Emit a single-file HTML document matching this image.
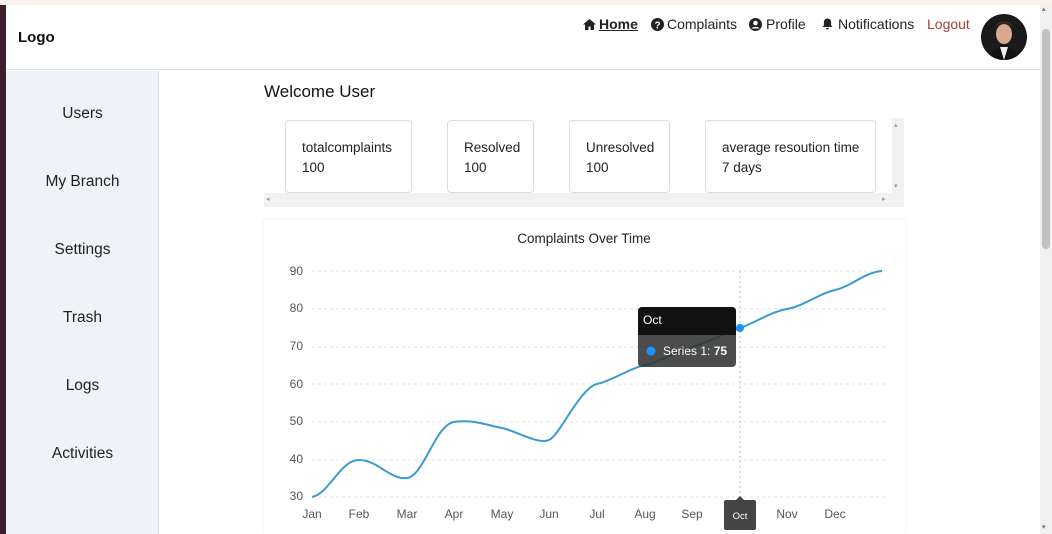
<!DOCTYPE html>
<html><head><meta charset="utf-8"><style>
*{margin:0;padding:0;box-sizing:border-box}
body{width:1052px;height:534px;overflow:hidden;background:#fff;font-family:"Liberation Sans",sans-serif;color:#111;position:relative}
.topline{position:absolute;left:0;top:0;width:1052px;height:5px;background:#fbf1ec}
.leftedge{position:absolute;left:0;top:5px;width:6px;height:529px;background:#3a1f2e}
.header{position:absolute;left:6px;top:5px;width:1034px;height:65px;border-bottom:1px solid #e4e4e4;background:#fff}
.logo{position:absolute;left:12px;top:24px;font-weight:bold;font-size:15px}
.nav{position:absolute;top:16px;font-size:14px;color:#222;white-space:nowrap}
.side{position:absolute;left:6px;top:71px;width:153px;height:463px;background:#eff2f7;border-right:1px solid #ddd}
.side div{position:absolute;width:153px;text-align:center;font-size:15.5px;color:#222}
.scroll{position:absolute;left:1040px;top:5px;width:12px;height:529px;background:#f1f1f1}
.card{position:absolute;top:120px;height:73px;border:1px solid #ddd;border-radius:4px;background:#fff;font-size:13.5px;line-height:20px;padding:17px 0 0 16px;color:#222;white-space:nowrap}
</style></head><body>
<div class="topline"></div><div class="leftedge"></div>
<div class="header">
<div class="logo">Logo</div>
</div>
<div class="nav" style="left:583px"><svg width="13" height="11" viewBox="0 0 13 11" style="vertical-align:-1px"><path d="M6.5 0L0 5.5h2V11h3.5V7.5h2V11H11V5.5h2z" fill="#222"/></svg></div>
<div class="nav" style="left:599px"><b style="text-decoration:underline">Home</b></div>
<div class="nav" style="left:651px"><svg width="13" height="13" viewBox="0 0 13 13" style="vertical-align:-2px"><circle cx="6.5" cy="6.5" r="6.5" fill="#222"/><text x="6.5" y="10.5" font-size="10" font-weight="bold" text-anchor="middle" fill="#fff" font-family="Liberation Sans">?</text></svg></div>
<div class="nav" style="left:667px">Complaints</div>
<div class="nav" style="left:749px"><svg width="13" height="13" viewBox="0 0 13 13" style="vertical-align:-2px"><circle cx="6.5" cy="6.5" r="6.5" fill="#222"/><circle cx="6.5" cy="5" r="2.3" fill="#fff"/><path d="M2.5 10.5a4.5 3 0 0 1 8 0" fill="#fff"/></svg></div>
<div class="nav" style="left:766px">Profile</div>
<div class="nav" style="left:822px"><svg width="11" height="12" viewBox="0 0 11 12" style="vertical-align:-1px"><path d="M5.5 0.5c-2.2 0-3.6 1.6-3.6 3.8v3L0.5 9h10L9.1 7.3v-3C9.1 2.1 7.7 0.5 5.5 0.5zM4 10h3a1.5 1.5 0 0 1-3 0z" fill="#222"/></svg></div>
<div class="nav" style="left:838px">Notifications</div>
<div class="nav" style="left:927px;color:#a5403f">Logout</div>
<svg style="position:absolute;left:981px;top:14px" width="46" height="46" viewBox="0 0 46 46"><defs><clipPath id="c"><circle cx="23" cy="23" r="23"/></clipPath></defs><g clip-path="url(#c)"><rect width="46" height="46" fill="#1a1a1a"/><ellipse cx="23" cy="20" rx="8" ry="10" fill="#d8a890"/><path d="M15 14c2-6 14-6 16 0v-3c-2-5-14-5-16 0z" fill="#3a2a20"/><path d="M8 46c2-10 8-13 15-13s13 3 15 13z" fill="#111"/><path d="M19 33l4 13 4-13z" fill="#eee"/></g></svg>
<div class="side">
<div style="top:34px">Users</div><div style="top:102px">My Branch</div><div style="top:170px">Settings</div><div style="top:238px">Trash</div><div style="top:306px">Logs</div><div style="top:374px">Activities</div>
</div>
<div style="position:absolute;left:264px;top:82px;font-size:17px;color:#111">Welcome User</div>
<div style="position:absolute;left:264px;top:193px;width:640px;height:14px;background:#f1f1f1"></div>
<div style="position:absolute;left:892px;top:118px;width:12px;height:75px;background:#f1f1f1"></div>
<div style="position:absolute;left:266px;top:195px;font-size:7px;color:#999">◂</div>
<div style="position:absolute;left:882px;top:195px;font-size:7px;color:#999">▸</div>
<div style="position:absolute;left:894px;top:121px;font-size:7px;color:#999">▴</div>
<div style="position:absolute;left:894px;top:182px;font-size:7px;color:#999">▾</div>
<div class="card" style="left:285px;width:127px">totalcomplaints<br>100</div>
<div class="card" style="left:447px;width:87px">Resolved<br>100</div>
<div class="card" style="left:569px;width:101px">Unresolved<br>100</div>
<div class="card" style="left:705px;width:171px;padding-left:16px">average resoution time<br>7 days</div>
<div style="position:absolute;left:264px;top:220px;width:641px;height:314px;background:#fff;box-shadow:0 0 3px rgba(0,0,0,.08)"></div>
<svg style="position:absolute;left:0;top:0" width="1052" height="534" font-family="Liberation Sans,sans-serif">
<text x="584" y="243" font-size="13.5" text-anchor="middle" fill="#222">Complaints Over Time</text>
<g stroke="#e3e3e3" stroke-dasharray="3,3">
<line x1="312" x2="885" y1="271" y2="271"/><line x1="312" x2="885" y1="309" y2="309"/><line x1="312" x2="885" y1="347" y2="347"/><line x1="312" x2="885" y1="384" y2="384"/><line x1="312" x2="885" y1="422" y2="422"/><line x1="312" x2="885" y1="460" y2="460"/><line x1="312" x2="885" y1="497" y2="497"/>
</g>
<g font-size="12" fill="#555" text-anchor="end"><text x="303" y="275">90</text><text x="303" y="312">80</text><text x="303" y="350">70</text><text x="303" y="388">60</text><text x="303" y="425">50</text><text x="303" y="463">40</text><text x="303" y="500">30</text></g>
<g font-size="12" fill="#555" text-anchor="middle"><text x="312" y="518">Jan</text><text x="359" y="518">Feb</text><text x="407" y="518">Mar</text><text x="454" y="518">Apr</text><text x="502" y="518">May</text><text x="549" y="518">Jun</text><text x="597" y="518">Jul</text><text x="645" y="518">Aug</text><text x="692" y="518">Sep</text><text x="787" y="518">Nov</text><text x="835" y="518">Dec</text></g>
<line x1="740" x2="740" y1="271" y2="497" stroke="#bbb" stroke-dasharray="2,3"/>
<path d="M312 497C330 493 340 460 359 460S390 480 407 478S435 425 454 422S490 426 502 428S538 445 549 440S580 388 597 384S630 368 645 365S680 350 692 347S725 333 740 328S770 312 787 309S820 293 835 290S865 272 882 271" fill="none" stroke="#3a9ad3" stroke-width="2"/>
<rect x="638" y="307" width="98" height="60" rx="4" fill="#333" opacity=".88"/>
<path d="M638 311a4 4 0 0 1 4-4h90a4 4 0 0 1 4 4v24h-98z" fill="#111"/>
<text x="643" y="324" font-size="12" fill="#fff">Oct</text>
<circle cx="651" cy="351" r="4.5" fill="#1e90ff"/>
<text x="663" y="355" font-size="12" fill="#fff">Series 1:  <tspan font-weight="bold">75</tspan></text>
<circle cx="740" cy="328" r="4" fill="#1e90ff"/>
<path d="M736 500l4-4 4 4z" fill="#444"/>
<rect x="724" y="500" width="32" height="30" rx="2" fill="#444"/>
<text x="740" y="519" font-size="9.5" fill="#fff" text-anchor="middle">Oct</text>
</svg>
<div class="scroll"><div style="position:absolute;left:2px;top:24px;width:8px;height:220px;background:#c1c1c1;border-radius:4px"></div><div style="position:absolute;left:2px;top:0;font-size:7px;color:#666">▴</div><div style="position:absolute;left:2px;top:518px;font-size:7px;color:#666">▾</div></div>
</body></html>
